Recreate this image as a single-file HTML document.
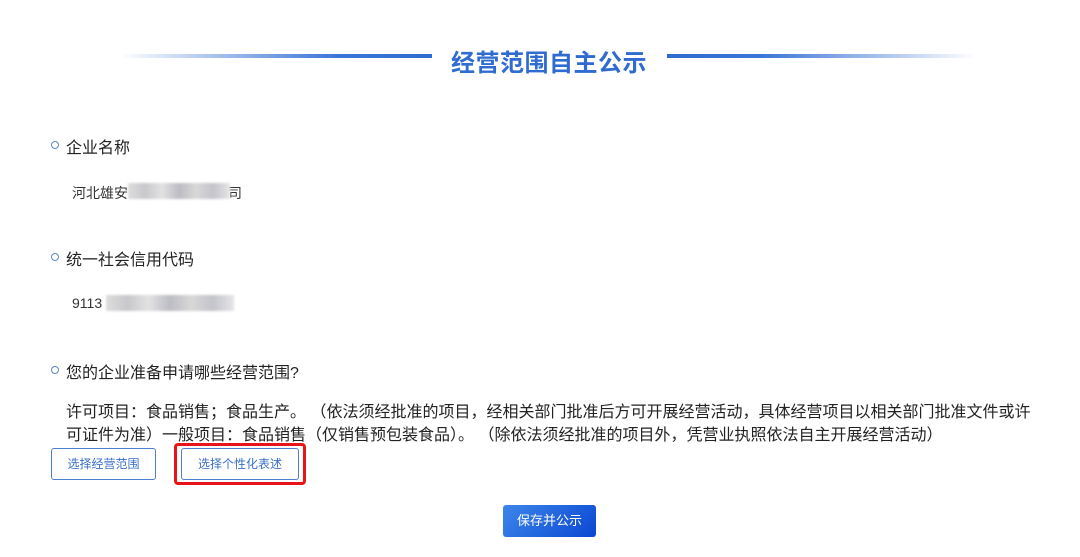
<!DOCTYPE html>
<html><head><meta charset="utf-8"><style>
body{margin:0;width:1080px;height:557px;background:#fff;font-family:"Liberation Sans","Noto Sans CJK SC",sans-serif;color:#222;position:relative;overflow:hidden}
.a{position:absolute;white-space:nowrap}
.ln{position:absolute;height:4px;top:54px}
.dot{position:absolute;left:51px;width:6px;height:6px;border:1.5px solid #5a86c8;border-radius:50%}
.lab{font-size:16px;left:66px}
.val{font-size:14px;left:72px;color:#333}
.blur{position:absolute;background:linear-gradient(90deg,#ddd,#c8c8cc,#e2e2e2,#bcbcc4,#d8d8d8,#c4c4cc,#e6e6e6);filter:blur(1px)}
.btn{position:absolute;border:1px solid #4a7fd0;border-radius:3px;color:#3a6fc8;font-size:12px;text-align:center;line-height:30px;background:#fff}
</style></head><body>
<div class="ln" style="left:120px;width:312px;background:linear-gradient(90deg,rgba(47,107,208,0),#3a74d6 70%,#2f6bd0)"></div>
<div class="ln" style="left:667px;width:308px;background:linear-gradient(90deg,#2f6bd0,#3a74d6 30%,rgba(47,107,208,0))"></div>
<div class="a" style="left:451px;top:43px;font-size:24px;font-weight:bold;color:#2f6bd0;letter-spacing:0.5px">经营范围自主公示</div>

<div class="dot" style="top:141px"></div>
<div class="a lab" style="top:134px">企业名称</div>
<div class="a val" style="top:183px">河北雄安<span style="display:inline-block;width:100px"></span>司</div>
<div class="blur" style="left:128px;top:183px;width:102px;height:16px"></div>

<div class="dot" style="top:253px"></div>
<div class="a lab" style="top:246px">统一社会信用代码</div>
<div class="a val" style="top:295px">9113</div>
<div class="blur" style="left:106px;top:295px;width:128px;height:16px"></div>

<div class="dot" style="top:366px"></div>
<div class="a lab" style="top:359px">您的企业准备申请哪些经营范围?</div>
<div class="a" style="left:66px;top:401px;font-size:16px;line-height:23px;white-space:normal;width:975px">许可项目：食品销售；食品生产。&nbsp;（依法须经批准的项目，经相关部门批准后方可开展经营活动，具体经营项目以相关部门批准文件或许可证件为准）一般项目：食品销售（仅销售预包装食品）。&nbsp;（除依法须经批准的项目外，凭营业执照依法自主开展经营活动）</div>

<div class="btn" style="left:51px;top:448px;width:103px;height:30px">选择经营范围</div>
<div style="position:absolute;left:174px;top:443px;width:126px;height:36px;border:3px solid #e8141a;border-radius:4px"></div>
<div class="btn" style="left:181px;top:448px;width:116px;height:30px">选择个性化表述</div>
<div style="position:absolute;left:503px;top:505px;width:93px;height:32px;border-radius:3px;background:linear-gradient(135deg,#3d86ea,#0a47d2);color:#fff;font-size:13px;text-align:center;line-height:32px">保存并公示</div>
</body></html>
